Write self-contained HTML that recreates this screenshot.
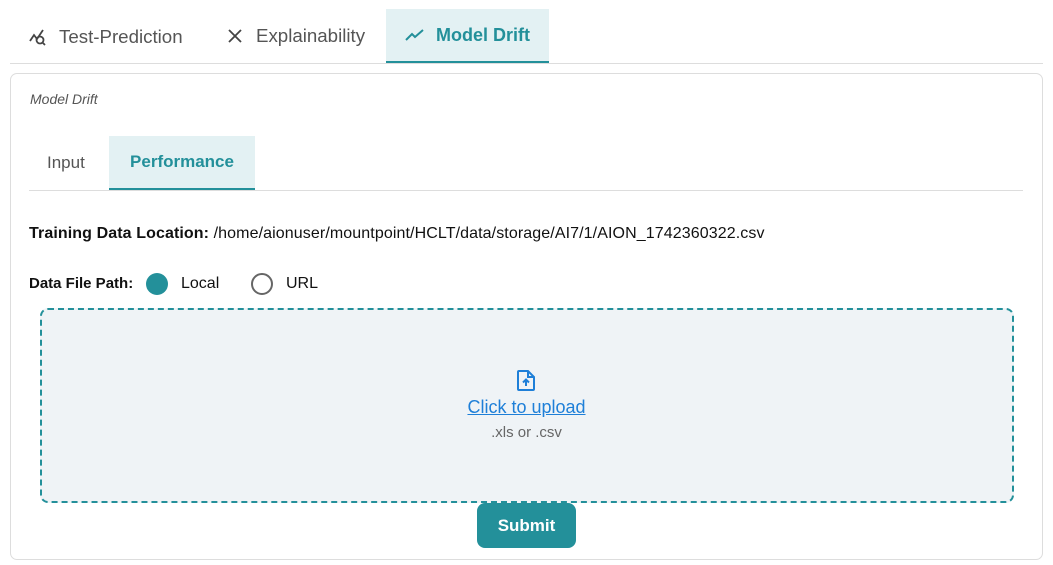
<!DOCTYPE html>
<html><head><style>
*{box-sizing:border-box;margin:0;padding:0}
body{width:1053px;height:565px;background:#fff;font-family:"Liberation Sans",sans-serif;position:relative;overflow:hidden;color:#222}
.a{position:absolute}
.tab{position:absolute;top:9px;height:54px;display:flex;align-items:center;font-size:18px;color:#555;white-space:nowrap}
</style></head><body>
<div class="a" style="left:10px;top:63px;width:1033px;height:1px;background:#ddd"></div>
<div class="tab" style="left:28px;font-size:18.7px;top:10px">
<svg width="22" height="20" viewBox="0 0 22 20" style="margin-right:9px"><path d="M2 14 L6 8 L9 12 L15 3" fill="none" stroke="#444" stroke-width="1.8"/><circle cx="12" cy="13" r="3.5" fill="none" stroke="#444" stroke-width="1.8"/><path d="M14.5 15.5 L17 18" stroke="#444" stroke-width="1.8"/></svg>Test-Prediction</div>
<div class="tab" style="left:226px;font-size:18.7px">
<svg width="18" height="18" viewBox="0 0 18 18" style="margin-right:12px"><path d="M3 3L15 15M15 3L3 15" stroke="#444" stroke-width="1.8"/></svg>Explainability</div>
<div class="tab" style="left:386px;width:163px;background:#e3f1f3;border-bottom:2px solid #23909a;color:#23909a;font-weight:bold;justify-content:center;height:54px">
<svg width="20" height="14" viewBox="0 0 20 14" style="margin-right:11px"><path d="M1 12 L7 6 L10 9 L18 2" fill="none" stroke="#23909a" stroke-width="2"/></svg>Model Drift</div>

<div class="a" style="left:10px;top:73px;width:1033px;height:487px;border:1px solid #ddd;border-radius:7px"></div>
<div class="a" style="left:30px;top:91px;font-size:14px;font-style:italic;color:#555">Model Drift</div>
<div class="a" style="left:29px;top:190px;width:994px;height:1px;background:#ddd"></div>
<div class="a" style="left:47px;top:153px;font-size:17px;color:#555">Input</div>
<div class="a" style="left:109px;top:136px;width:146px;height:54px;background:#e3f1f3;border-bottom:2px solid #23909a;color:#23909a;font-weight:bold;font-size:17px;text-align:center;line-height:52px">Performance</div>

<div class="a" style="left:29px;top:225px;font-size:16px;letter-spacing:0.1px;color:#111;white-space:nowrap"><b>Training Data Location:</b> /home/aionuser/mountpoint/HCLT/data/storage/AI7/1/AION_1742360322.csv</div>
<div class="a" style="left:29px;top:275px;font-size:15px;color:#111;font-weight:bold">Data File Path:</div>
<div class="a" style="left:146px;top:273px;width:22px;height:22px;border-radius:50%;background:#23909a"></div>
<div class="a" style="left:181px;top:275px;font-size:16px;color:#111">Local</div>
<div class="a" style="left:251px;top:273px;width:22px;height:22px;border-radius:50%;border:2px solid #666"></div>
<div class="a" style="left:286px;top:275px;font-size:16px;color:#111">URL</div>

<div class="a" style="left:40px;top:308px;width:974px;height:195px;border:2px dashed #23909a;border-radius:8px;background:#eff3f6"></div>
<svg class="a" style="left:516px;top:369px" width="20" height="23" viewBox="0 0 20 23"><path d="M3 2 H12 L18 8 V20 a1 1 0 0 1-1 1 H3 a1 1 0 0 1-1-1 V3 a1 1 0 0 1 1-1Z M12 2 V8 H18" fill="none" stroke="#1e7fd8" stroke-width="2"/><path d="M10 17 V11 M7 13.5 L10 10.5 L13 13.5" fill="none" stroke="#1e7fd8" stroke-width="2"/></svg>
<div class="a" style="left:0;width:1053px;top:397px;text-align:center;font-size:18px;color:#1e7fd8;text-decoration:underline">Click to upload</div>
<div class="a" style="left:0;width:1053px;top:424px;text-align:center;font-size:15px;color:#666">.xls or .csv</div>
<div class="a" style="left:477px;top:503px;width:99px;height:45px;border-radius:8px;background:#23909a;color:#fff;font-weight:bold;font-size:17px;text-align:center;line-height:45px">Submit</div>
</body></html>
